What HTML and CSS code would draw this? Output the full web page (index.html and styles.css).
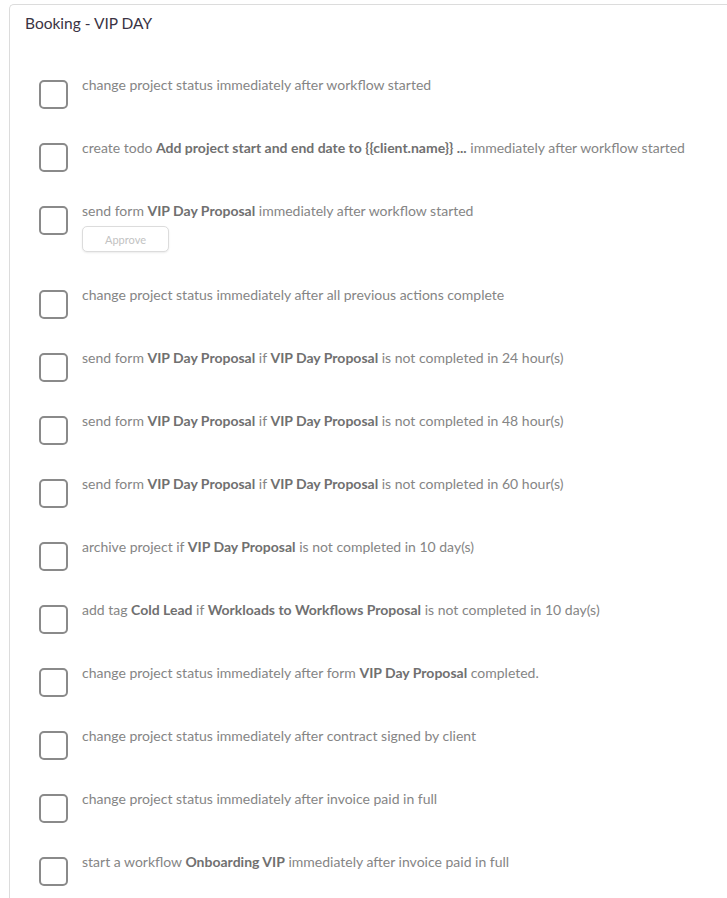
FILE: index.html
```html
<!DOCTYPE html>
<html>
<head>
<meta charset="utf-8">
<link rel="stylesheet" href="styles.css">
</head>
<body>
<div class="card">
  <div class="title">Booking - VIP DAY</div>
  <ul class="list">
    <li class="row"><span class="box"></span><div class="text">change project status immediately after workflow started</div></li>
    <li class="row"><span class="box"></span><div class="text">create todo <b>Add project start and end date to {{client.name}} ...</b> immediately after workflow started</div></li>
    <li class="row"><span class="box"></span><div class="text">send form <b>VIP Day Proposal</b> immediately after workflow started<div><button class="approve">Approve</button></div></div></li>
    <li class="row"><span class="box"></span><div class="text">change project status immediately after all previous actions complete</div></li>
    <li class="row"><span class="box"></span><div class="text">send form <b>VIP Day Proposal</b> if <b>VIP Day Proposal</b> is not completed in 24 hour(s)</div></li>
    <li class="row"><span class="box"></span><div class="text">send form <b>VIP Day Proposal</b> if <b>VIP Day Proposal</b> is not completed in 48 hour(s)</div></li>
    <li class="row"><span class="box"></span><div class="text">send form <b>VIP Day Proposal</b> if <b>VIP Day Proposal</b> is not completed in 60 hour(s)</div></li>
    <li class="row"><span class="box"></span><div class="text">archive project if <b>VIP Day Proposal</b> is not completed in 10 day(s)</div></li>
    <li class="row"><span class="box"></span><div class="text">add tag <b>Cold Lead</b> if <b>Workloads to Workflows Proposal</b> is not completed in 10 day(s)</div></li>
    <li class="row"><span class="box"></span><div class="text">change project status immediately after form <b>VIP Day Proposal</b> completed.</div></li>
    <li class="row"><span class="box"></span><div class="text">change project status immediately after contract signed by client</div></li>
    <li class="row"><span class="box"></span><div class="text">change project status immediately after invoice paid in full</div></li>
    <li class="row"><span class="box"></span><div class="text">start a workflow <b>Onboarding VIP</b> immediately after invoice paid in full</div></li>
  </ul>
</div>
</body>
</html>
```
FILE: styles.css
```css
html, body {
  margin: 0;
  padding: 0;
  background: #fff;
  overflow: hidden;
}
body {
  font-family: Lato, "Open Sans", sans-serif;
  padding: 4px 0 0 9px;
  height: 898px;
  box-sizing: border-box;
}
.card {
  height: 100%;
  border: 1px solid #dcdcdc;
  border-right: none;
  border-bottom: none;
  border-top-left-radius: 5px;
  box-sizing: border-box;
  padding: 9px 0 0 15px;
  overflow: hidden;
}
.title {
  font-size: 15.5px;
  color: #3a3344;
  line-height: 18px;
}
.list {
  list-style: none;
  margin: 0;
  padding: 48px 0 0 14px;
}
.row {
  display: flex;
  align-items: flex-start;
  gap: 14px;
  min-height: 63px;
}
.row:nth-child(3) {
  min-height: 84px;
}
.box {
  flex: none;
  width: 29px;
  height: 29px;
  box-sizing: border-box;
  border: 2px solid #8a8a8a;
  border-radius: 5px;
}
.text {
  font-size: 14px;
  color: #858585;
  line-height: 16px;
  margin-top: -3px;
}
.text b {
  font-weight: 700;
  color: #707070;
}
.approve {
  display: block;
  margin-top: 7px;
  width: 87px;
  height: 26px;
  background: #fff;
  border: 1px solid #dcdcdc;
  border-radius: 5px;
  box-shadow: 0 1px 2px rgba(0,0,0,0.08);
  font-family: Lato, sans-serif;
  font-size: 11px;
  color: #c2c2c2;
  padding: 0;
}
```
